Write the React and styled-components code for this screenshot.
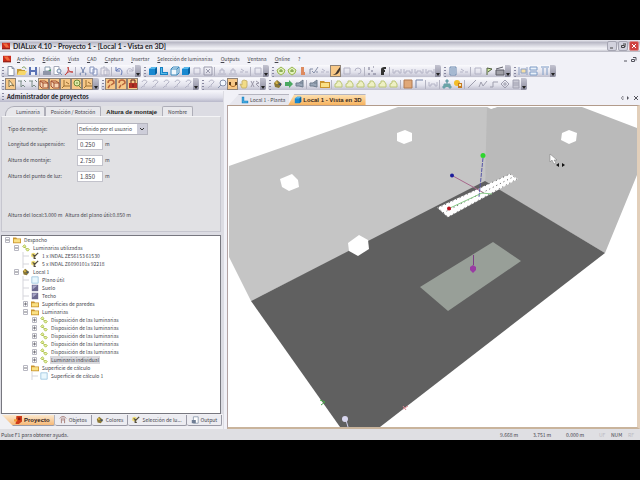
import React from 'react';
import styled, { createGlobalStyle, css } from 'styled-components';

const GlobalStyle = createGlobalStyle`
	* {
		box-sizing: border-box;
	}
	body {
		margin: 0;
		background: #000;
		font-family: 'Noto Sans CJK SC', 'Liberation Sans', Arial, sans-serif;
		font-size: 5px;
		line-height: 8px;
		color: #44444c;
	}
	button,
	input,
	select {
		font: inherit;
		color: inherit;
		margin: 0;
		padding: 0;
		border: 0;
		background: none;
		border-radius: 0;
	}
	a {
		color: inherit;
		text-decoration: none;
	}
	svg {
		display: block;
		flex: none;
	}
`;

const Screen = styled.div`
	min-height: 100vh;
	padding: 40px 0;
	display: flex;
	flex-direction: column;
	background: #000;
`;

const Window = styled.div`
	flex: 1;
	display: flex;
	flex-direction: column;
	background: #f1f1f7;
`;

const TitleBar = styled.header`
	display: flex;
	align-items: center;
	height: 12px;
	padding: 0 1px 0 2px;
	gap: 3px;
	background: linear-gradient(#e8e8ef, #b9b9c6 20%, #e3e3ea 55%, #f6f6fa 75%, #b2b2bd);
`;

const Title = styled.h1`
	flex: 1;
	margin: 0;
	font-family: Lato, 'Liberation Sans', sans-serif;
	font-size: 7px;
	line-height: 10px;
	color: #26262b;
`;

const WindowButton = styled.button`
	width: 10px;
	height: 10px;
	display: grid;
	place-items: center;
	border: 1px solid ${(p) => (p.$close ? '#d98a8a' : '#a5a5b2')};
	border-radius: 2px;
	background: ${(p) => (p.$close ? '#cf4240' : '#d2d2dd')};
	color: ${(p) => (p.$close ? '#fff' : '#444')};
`;

const WindowButtons = styled.div`
	display: flex;
	gap: 1px;
`;

const MenuBar = styled.nav`
	display: flex;
	align-items: center;
	height: 13px;
	padding: 0 3px;
`;

const MenuItems = styled.div`
	flex: 1;
	display: flex;
	gap: 8px;
	padding-left: 6px;
	white-space: nowrap;
	a::first-letter {
		text-decoration: underline;
	}
`;

const ChildButtons = styled.div`
	display: flex;
	gap: 1px;
`;

const FlatButton = styled.button`
	display: grid;
	place-items: center;
	width: 7px;
	height: 10px;
	color: #55555e;
`;

const ToolRow = styled.div`
	display: flex;
	height: 13px;
	gap: 2px;
	padding-left: 1px;
`;

const Group = styled.div`
	display: flex;
	align-items: center;
	height: 12px;
	padding-left: 4px;
	border-radius: 2px;
	background:
		radial-gradient(circle, #8888a0 40%, transparent 50%) 1px 1px / 2px 3px repeat-y,
		linear-gradient(#fafafd, #e2e2ec 60%, #bfbfce);
`;

const ToolButton = styled.button`
	width: 11px;
	height: 12px;
	display: grid;
	place-items: center;
	${(p) =>
		p.$active &&
		css`
			background: #f7c887;
			border: 1px solid #8f8378;
		`}
`;

const Separator = styled.span`
	width: 1px;
	height: 9px;
	margin: 0 1px;
	background: #b3b3c2;
`;

const Overflow = styled.button`
	align-self: stretch;
	width: 6px;
	margin-left: auto;
	display: grid;
	place-items: end center;
	padding-bottom: 1px;
	border-radius: 0 2px 2px 0;
	background: linear-gradient(#c4c4d1, #8c8c9e);
`;

const Workspace = styled.div`
	flex: 1;
	display: flex;
	min-height: 0;
`;

const Sidebar = styled.aside`
	flex: 0 0 35%;
	min-width: 0;
	display: flex;
	flex-direction: column;
	padding-right: 1px;
	background: #dcdce3;
`;

const PanelTitle = styled.h2`
	margin: 0;
	height: 11px;
	padding: 1px 0 0 7px;
	font-size: 6px;
	line-height: 9px;
	color: #25252c;
	background:
		radial-gradient(circle, #8888a0 40%, transparent 50%) 2px 1px / 2px 3px repeat-y,
		linear-gradient(#f5f5fa, #dcdce8 60%, #b8b8ca);
`;

const FormTabs = styled.div`
	display: flex;
	height: 14px;
	padding: 4px 0 0 5px;
`;

const FormTab = styled.button`
	height: 10px;
	padding: 0 5px;
	white-space: nowrap;
	border: 1px solid #aeaeb8;
	border-bottom: 0;
	border-radius: 2px 2px 0 0;
	background: #e8e8ec;
	&:first-child {
		padding: 0 4px 0 10px;
		border-radius: 9px 2px 0 0;
	}
	${(p) =>
		p.$active &&
		css`
			padding: 0 4px;
			font-family: 'Liberation Sans', Arial, sans-serif;
			font-size: 6px;
			font-weight: bold;
			color: #222;
			border-color: transparent;
			background: #e1e1e4;
		`}
`;

const FormPanel = styled.form`
	height: 116px;
	margin: 0 2px 0 1px;
	padding: 6px 6px 0;
	border: 1px solid #c6c6cf;
	border-top-color: #f4f4f6;
	background: #e1e1e4;
`;

const Field = styled.div`
	display: flex;
	align-items: center;
	height: 12px;
	margin-bottom: ${(p) => (p.$first ? 3 : 4)}px;
	white-space: nowrap;
	label {
		width: 69px;
	}
`;

const NumberInput = styled.input`
	width: 26px;
	height: 11px;
	margin-right: 2px;
	padding-left: 2px;
	font-size: 6px;
	border: 1px solid #c2c2cb;
	background: #fff;
`;

const SelectBox = styled.div`
	display: grid;
	grid-template-columns: 1fr 10px;
	width: 71px;
	height: 12px;
	border: 1px solid #b4b4be;
	background: #fff;
	svg {
		grid-area: 1 / 2;
		place-self: stretch;
		pointer-events: none;
		background: #cdcdd9;
	}
`;

const Select = styled.select`
	grid-area: 1 / 1 / 2 / 3;
	appearance: none;
	width: 100%;
	height: 10px;
	padding-left: 1px;
`;

const Heights = styled.p`
	display: flex;
	gap: 3px;
	margin: 29px 0 0;
`;

const TreeBox = styled.ul`
	flex: 1;
	margin: 3px 2px 0 1px;
	padding: 0;
	list-style: none;
	border: 1px solid #77777f;
	background: #fff;
`;

const TreeRow = styled.li`
	display: flex;
	align-items: center;
	height: 8px;
	padding-left: ${(p) => 2 + p.$depth * 9}px;
	gap: 2px;
	white-space: nowrap;
	span {
		padding: 0 1px;
		background: ${(p) => (p.$selected ? '#d8d8dc' : 'none')};
	}
`;

const BottomTabs = styled.nav`
	display: flex;
	height: 15px;
	padding: 1px 0 3px 2px;
	background: #f0f0f4;
`;

const BottomTab = styled.button`
	display: flex;
	align-items: center;
	justify-content: center;
	gap: 2px;
	padding: 0 4px;
	white-space: nowrap;
	border: solid #9a9aa6;
	border-width: 0 1px 1px 0;
	border-radius: 0 0 2px 2px;
	background: #ececf1;
	${(p) =>
		p.$active &&
		css`
			padding-left: 12px;
			font-family: 'Liberation Sans', Arial, sans-serif;
			font-size: 6px;
			font-weight: bold;
			color: #33221a;
			background: linear-gradient(#fbe9cf, #f6b978);
			clip-path: polygon(0 0, 100% 0, 100% 100%, 11px 100%);
		`}
`;

const Viewer = styled.main`
	flex: 1;
	min-width: 0;
	display: flex;
	flex-direction: column;
	padding-left: 3px;
`;

const ViewTabs = styled.div`
	display: flex;
	align-items: flex-end;
	height: 14px;
	padding: 0 1px 0 2px;
`;

const ViewTab = styled.button`
	display: flex;
	align-items: center;
	justify-content: center;
	gap: 1px;
	height: 11px;
	padding: 0 4px 0 12px;
	white-space: nowrap;
	border-top: 1px solid #b5b5c0;
	background: #e7e7ee;
	clip-path: polygon(0 100%, 10px 0, 100% 0, 100% 100%);
	${(p) =>
		p.$active &&
		css`
			padding: 0 4px 0 6px;
			margin-left: -1px;
			font-family: 'Liberation Sans', Arial, sans-serif;
			font-size: 6px;
			font-weight: bold;
			color: #3a2a1c;
			background: linear-gradient(#fde0b0, #f7b25d);
			clip-path: polygon(0 100%, 6px 0, 100% 0, 100% 100%);
		`}
`;

const ViewNav = styled.div`
	display: flex;
	margin-left: auto;
	align-self: center;
`;

const Canvas = styled.div`
	flex: 1;
	min-height: 0;
	padding: 1px 0 0 1px;
	border: 1px solid #b29b8b;
	border-width: 1px 3px 2px 1px;
	border-color: #b29b8b #e2cfba #c9b49c #b3a3a3;
	background: #fff;
	svg {
		width: 100%;
	}
`;

const StatusBar = styled.footer`
	display: flex;
	align-items: center;
	height: 11px;
	padding-left: 1px;
	background: #dfdfe3;
	span:first-child {
		flex: 1;
	}
`;

const Coordinate = styled.span`
	width: 33px;
`;

const LockKey = styled.span`
	width: ${(p) => (p.$on ? 17 : 12)}px;
	color: ${(p) => (p.$on ? '#44444c' : '#b9b9c2')};
`;

const pale = '#b4b4c6';

const icons = {
	app: (
		<>
			<path d="M0 1h10v8H0z" fill="#c92a1c" />
			<path d="M1 2h5l3 5H5z" fill="#f06a3c" />
			<path d="M0 8h10v1H0z" fill="#7a1c18" />
		</>
	),
	page: <path d="M2 .5h4l2 2v7H2z M6 .5v2h2" fill="#fff" stroke="#8b93a8" />,
	open: (
		<>
			<path d="M0 3h4l1 1h3v5H0z" fill="#c49a35" />
			<path d="M2 5h8L8 9H0z" fill="#f7d76a" />
			<path d="M5 2c2-2 3-1 4 1" fill="none" stroke="#7ca05a" />
		</>
	),
	save: (
		<>
			<path d="M1 1h8v8H1z" fill="#5b72b5" />
			<path d="M3 1h4v3H3z M3 6h4v3H3z" fill="#eef1fa" />
		</>
	),
	print: (
		<>
			<path d="M3 1h5v4H3z" fill="#fff" stroke="#8a9db0" />
			<path d="M1 5h8v4H1z" fill="#8f96a8" />
			<path d="M6 5l3-2v2z" fill="#48a060" />
		</>
	),
	preview: (
		<>
			<path d="M1 .5h5v8H1z" fill="#fff" stroke="#a4a9b8" />
			<circle cx="6" cy="5" r="2" fill="#e4eef8" stroke="#788cab" />
			<path d="M7 7l2 2" stroke="#788cab" />
		</>
	),
	pdf: <path d="M1 9c3-2 4-6 3-8 0 4 3 6 5 5-3-1-6 0-8 3" fill="none" stroke="#c5403c" />,
	cut: <path d="M3 1l3 6M7 1L4 7M3 7a1 1 0 100 2M7 7a1 1 0 110 2" fill="none" stroke="#6e80a9" />,
	copy: <path d="M1 1h4v6H1z M4 3h4v6H4z" fill="#f6f8ff" stroke="#8795bd" />,
	paste: <path d="M1 2h6v7H1z M4 4h5v5H4z M3 1h2" fill="#eceaf0" stroke={pale} />,
	undo: <path d="M2 1v4h4M2 5c3-5 8-1 5 4" fill="none" stroke="#6277b5" />,
	redo: <path d="M8 1v4H4M8 5C5 0 0 4 3 8" fill="none" stroke={pale} />,
	cube: (
		<>
			<path d="M1 3l3-2h5v6L7 9H1z" fill="#1888d0" />
			<path d="M1 3l3-2h5L7 3z" fill="#58b8ea" />
			<path d="M7 3l2-2v6L7 9z" fill="#08609f" />
		</>
	),
	lshape: (
		<>
			<path d="M1 1h3v5h5v3H1z" fill="#1780c4" />
			<path d="M2 2h1v5h5v1H2z" fill="#5bbde8" />
		</>
	),
	cubeLine: <path d="M1 3h6v6H1z M1 3l2-2h6v6L7 9M7 3l2-2" fill="#eff7fc" stroke="#3988bc" />,
	box: <path d="M2 2h6v6H2z" fill="none" stroke={pale} />,
	cross: <path d="M1 1h8v8H1z M3 3l4 4M7 3L3 7" fill="none" stroke="#9a9aac" />,
	bars: <path d="M1 8h8M3 7V4h4v3M5 4V2" fill="none" stroke={pale} />,
	dash: <path d="M1 6h3M6 6h3M2 3l3 2" fill="none" stroke={pale} />,
	globe: (
		<>
			<path d="M1 4l4-3 4 3-1 3-3 2-3-2z" fill="#e3f3bd" stroke="#9ab650" />
			<path d="M5 3v3M3 5h4" stroke="#6f9436" fill="none" />
		</>
	),
	thermo: <path d="M3 1h3v5h1v3H3z" fill="#dd8a5f" />,
	check: <path d="M1 8V3h3M3 5l2 2 4-6M7 6h2" fill="none" stroke="#8790a8" />,
	brush: <path d="M1 8c3 1 4-1 5-3l3-4v3C8 8 4 10 1 8z" fill="#3f342e" />,
	circle: <path d="M2 5a3 3 0 116 0 3 3 0 01-3 3" fill="none" stroke={pale} />,
	dots: <path d="M2 1v3M5 4v2M2 7v2M6 8h3M6 1h1" stroke="#75758c" fill="none" />,
	bold: <path d="M3 9V4c0-3 2-3 5-3v2c-2 0-2 0-2 1h1v2H6v3z" fill="#333" />,
	mirror: <path d="M1 3v4h2V5h4v2h2V3" fill="none" stroke={pale} />,
	server: <path d="M2 1h6v8H2z M3 3h4M3 5h4M3 7h4" fill="#dfe8f4" stroke="#6d89ae" />,
	flag: <path d="M3 9V2l5 1-4 3" fill="#cde9a0" stroke="#525f42" />,
	clap: <path d="M1 4h8v5H1z M1 3l7-2" fill="#a1a1a8" stroke="#5d5d66" />,
	layout: <path d="M1 1v8M3 3h5v4H3z M9 1v8" fill="#f5dfa8" stroke="#8da0c4" />,
	rows: <path d="M1 1h7v3H1z M1 6h7v3H1z" fill="#e9f1fa" stroke="#7f9cc6" />,
	columns: <path d="M1 1h8M3 2v7M7 2v7" fill="none" stroke="#7f9cc6" />,
	arrow: <path d="M3 1v7l2-2 3 1z" fill="#fff7dc" stroke="#85744d" />,
	pick: <path d="M1 2h4M4 2v6l2-2 2 2M7 1l2 2" fill="none" stroke="#7b8c86" />,
	room: <path d="M1 2h5l3 2v5H3L1 7z M1 2l3 2h5M4 4v4" fill="#f6d5b2" stroke="#a14e31" />,
	axes: <path d="M3 1v6h6M3 7L1 9M5 3l3 2" fill="none" stroke="#9a6e31" />,
	lens: <path d="M2 4a3 3 0 116 0 3 3 0 01-6 0M6 6l3 3M4 4h2" fill="#dceca8" stroke="#6d8a37" />,
	magnet: <path d="M2 4c0-4 6-4 6 0L5 6M4 6L2 9" fill="none" stroke="#b8643c" strokeWidth="1.5" />,
	lockRed: (
		<>
			<path d="M1 4h8v5H1z" fill="#b22e25" />
			<path d="M3 4V1h4v3M5 5v3" fill="none" stroke="#642019" />
		</>
	),
	lamp: <path d="M3 3c1-3 5-2 5 0L5 6v2M2 9l2-2" fill="none" stroke={pale} />,
	zoom: <path d="M3 4a3 3 0 116 0 3 3 0 01-6 0M4 6L1 9" fill="#f3f8ff" stroke="#8893ab" />,
	eye: (
		<>
			<path d="M1 3h2v3H1z M7 3h2v3H7z" fill="#5a3a18" />
			<path d="M2 6c2 2 4 2 6 0" fill="none" stroke="#a05f1c" />
		</>
	),
	hand: <path d="M3 9L1 5l2 1V2l2-1 3 1v5L7 9z" fill="#f2dc86" stroke="#c9b470" />,
	percent: <path d="M1 2l3 6M4 2L1 8M6 2l3 2-3 1 3 3" fill="none" stroke="#9a98a8" />,
	palette: (
		<>
			<path d="M1 4l3-3 5 4-3 4-4-1z" fill="#8a7735" />
			<path d="M2 3l2-1 1 3H3z" fill="#d7b64a" />
			<path d="M5 5l3-1v3z" fill="#37527a" />
		</>
	),
	go: <path d="M1 3h4V1l4 4-4 4V7H1z" fill="#4aa860" />,
	camera: <path d="M1 4h3l4-3v7L4 7H1z M5 4h3" fill="#9aa7b8" stroke="#6f7c8d" />,
	folder: (
		<>
			<path d="M0 2h4l1 1h5v6H0z" fill="#c9942e" />
			<path d="M1 4h8v4H1z" fill="#fae185" />
		</>
	),
	plant: <path d="M1 8h7V5L6 2H3v2L1 5z" fill="#eef0c4" stroke="#bcc676" />,
	square: <path d="M1 1h8v8H1z" fill="#e0a878" stroke="#b07a52" />,
	corner: <path d="M2 9V1h7" fill="none" stroke="#7381a5" />,
	tree: <path d="M5 2v3M2 8V5h6v3M4 1h2v2H4z M1 7h2v2H1z M7 7h2v2H7z" fill="#6aa7a2" stroke="#6aa0ac" />,
	sun: (
		<>
			<circle cx="4" cy="4" r="3" fill="#f3bd28" />
			<path d="M5 4h4v5H5z" fill="#c47a22" />
			<path d="M6 5h2v2H6z" fill="#fbe9b0" />
		</>
	),
	line: <path d="M1 9l8-8" stroke="#9f9fae" />,
	zigzag: <path d="M1 8l2-5 2 4 4-5" fill="none" stroke="#9f9fae" />,
	step: <path d="M1 8h3V3h5" fill="none" stroke="#9f9fae" />,
	ring: <path d="M5 1l4 4-4 4-4-4z M4 4h2v2H4z" fill="none" stroke="#9f9fae" />,
	grid: <path d="M2 1h6v8H2z M2 4h6M2 6h6" fill="#c9c9d4" stroke="#a2a2b2" />,
	bulbs: <path d="M1 3l2-2 2 2-2 2z M5 7l2-2 2 2-2 2z M3 4l3 2" fill="#ecf6ad" stroke="#9db42d" />,
	fixture: (
		<>
			<circle cx="3" cy="4" r="3" fill="#efdd78" />
			<path d="M2 3l3 2 4-4M4 5v3h2" fill="none" stroke="#514b3d" strokeWidth="1.5" />
		</>
	),
	plane: <path d="M1 1h8v8H1z" fill="#e9f7fd" stroke="#98c2de" />,
	surface: (
		<>
			<path d="M1 1h8v8H1z" fill="#6b688f" />
			<path d="M2 2h6L2 7z" fill="#aaa8c8" />
		</>
	),
	project: (
		<>
			<path d="M3 0h7v7L6 10H2z" fill="#cf3c1a" />
			<path d="M0 4h4v3H0z" fill="#f2a13a" />
			<path d="M5 2h3v3H5z" fill="#8f1a10" />
		</>
	),
	objects: <path d="M1 3c2-3 6-3 8 0M3 3v6M7 3v6M5 2v4" fill="none" stroke="#9a6861" />,
	output: (
		<>
			<path d="M3 1h6v8H3z" fill="#fff" stroke="#8796aa" />
			<path d="M1 5h5v4H1z" fill="#6e7d94" />
		</>
	),
};

const Icon = ({ name, size = 10 }) => (
	<svg width={size} height={size} viewBox="0 0 10 10" aria-hidden="true">
		{icons[name]}
	</svg>
);

// "|" is a separator, a leading "*" marks a pressed button
const topTools = [
	'page open save | print preview pdf | cut copy paste | undo redo',
	'cube lshape cubeLine cube box cross | bars bars dash | box',
	'globe globe thermo check dash *brush box circle | dots bold | mirror mirror mirror mirror',
	'server dash | box flag clap',
	'layout rows columns',
];

const bottomTools = [
	'*arrow pick pick *room *room *axes *lens *axes',
	'*magnet *magnet *lockRed lamp lamp lamp lamp lamp',
	'lamp zoom *eye hand percent',
	'palette go camera | camera folder | plant plant plant plant plant plant | square corner | mirror | tree sun | line zigzag step ring grid',
];

const Toolbar = ({ groups, label }) => (
	<ToolRow role="toolbar" aria-label={label}>
		{groups.map((group) => (
			<Group key={group}>
				{group.split(' ').map((item, i) =>
					item === '|' ? (
						<Separator key={i} />
					) : (
						<ToolButton key={i} $active={item[0] === '*'} aria-label={item.replace('*', '')}>
							<Icon name={item.replace('*', '')} />
						</ToolButton>
					)
				)}
				<Overflow aria-label="Más botones">
					<svg width="4" height="4" viewBox="0 0 4 4">
						<path d="M0 1h4L2 4z" fill="#222" />
					</svg>
				</Overflow>
			</Group>
		))}
	</ToolRow>
);

const menus = ['Archivo', 'Edición', 'Vista', 'CAD', 'Captura', 'Insertar', 'Selección de luminarias', 'Outputs', 'Ventana', 'Online', '?'];

const heights = [
	['suspension', 'Longitud de suspensión:', '0.250'],
	['montaje', 'Altura de montaje:', '2.750'],
	['punto', 'Altura del punto de luz:', '1.850'],
];

// [depth, toggle, icon, text]
const tree = [
	[0, '-', 'folder', 'Despacho'],
	[1, '-', 'bulbs', 'Luminarias utilizadas'],
	[2, '', 'fixture', '1 x INDAL ZE56153 61530'],
	[2, '', 'fixture', '5 x INDAL Z6090101s 92218'],
	[1, '-', 'palette', 'Local 1'],
	[2, '', 'plane', 'Plano útil'],
	[2, '', 'surface', 'Suelo'],
	[2, '', 'surface', 'Techo'],
	[2, '+', 'folder', 'Superficies de paredes'],
	[2, '-', 'folder', 'Luminarias'],
	[3, '+', 'bulbs', 'Disposición de las luminarias'],
	[3, '+', 'bulbs', 'Disposición de las luminarias'],
	[3, '+', 'bulbs', 'Disposición de las luminarias'],
	[3, '+', 'bulbs', 'Disposición de las luminarias'],
	[3, '+', 'bulbs', 'Disposición de las luminarias'],
	[3, '+', 'bulbs', 'Luminaria individual'],
	[2, '-', 'folder', 'Superficie de cálculo'],
	[3, '', 'plane', 'Superficie de cálculo 1'],
];

const Toggle = ({ sign }) => (
	<svg width="7" height="8" viewBox="0 0 7 8">
		{sign ? (
			<>
				<path d="M1.5 1.5h4v5h-4z" fill="#fff" stroke="#b8b8c2" />
				<path d={sign === '+' ? 'M2 4h3M3.500 2.500v3' : 'M2 4h3'} stroke="#77777f" />
			</>
		) : (
			<path d="M1 0v8M1 4h6" fill="none" stroke="#d5d5db" />
		)}
	</svg>
);

const Scene = () => (
	<svg viewBox="229 107 408 320" role="img" aria-label="Vista en 3D">
		<path d="M229 166L398 107H491L485 183 251 301 229 257z" fill="#c5c5c5" />
		<path d="M487 107H491V108.500L497 107H582L637 128V175L605 253 485 182z" fill="#bababa" />
		<path d="M251 301L485 181 605 253 380 427H340z" fill="#606060" />
		<path d="M493 242L521 261 448 311 420 287z" fill="#989f98" />
		<g fill="#fff">
			<path d="M280 179l12-5 6 6 1 7-10 4-7-4z" />
			<path d="M397 133l8-3 7 3v8l-8 3-7-3z" />
			<path d="M348 243l11-8 9 5 1 9-11 7-9-5z" />
			<path d="M562 133l7-3 8 3-1 8-7 3-8-4z" />
			<path d="M487 107h10l-6 2z" />
		</g>
		<path d="M439 208L510 175 516 179 448 216z" fill="#fff" stroke="#fff" strokeWidth="2" />
		<path d="M438 208L510 174 517 179 448 217zM443 213L513 177" fill="none" stroke="#555" strokeDasharray="1 3" />
		<path d="M453 176L484 193" stroke="#a8688c" />
		<path d="M483 158L479 197" stroke="#5656a8" strokeDasharray="4 1" />
		<path d="M450 208L482 193 492 194" fill="none" stroke="#86c986" />
		<circle cx="452" cy="175.500" r="2" fill="#1c1c9c" />
		<circle cx="483" cy="155.500" r="2.500" fill="#2ed52e" />
		<circle cx="449" cy="208.500" r="2" fill="#b8101c" />
		<path d="M473.500 255v10" stroke="#7d3f86" />
		<path d="M470 267l3-2 3 2v3l-3 3-3-3z" fill="#993ba3" />
		<path d="M320 400l5 2-4 3" fill="none" stroke="#46a846" />
		<path d="M403 406l3 4M403 409l5-3" stroke="#dc8b96" />
		<path d="M346 420l2 7" stroke="#d5d5f2" />
		<circle cx="345" cy="419" r="3" fill="#d9d7f0" />
		<path d="M550 154v8l2-2 2 4 2-1-2-3h3z" fill="#fff" stroke="#777" strokeWidth=".5" />
		<path d="M556 165l3-2v4zM565 165l-3-2v4zM558 165h5" fill="#111" />
	</svg>
);

const App = () => {
	return (
		<Screen>
			<GlobalStyle />
			<Window>
				<TitleBar>
					<Icon name="app" size={8} />
					<Title>DIALux 4.10 - Proyecto 1 - [Local 1 - Vista en 3D]</Title>
					<WindowButtons>
						<WindowButton aria-label="Minimizar">
							<svg width="6" height="6"><path d="M1 5h3" stroke="currentColor" /></svg>
						</WindowButton>
						<WindowButton aria-label="Restaurar">
							<svg width="6" height="6"><path d="M1.500 2.500h3v2h-3zM3 1h3v3" fill="none" stroke="currentColor" /></svg>
						</WindowButton>
						<WindowButton $close aria-label="Cerrar">
							<svg width="6" height="6"><path d="M1 1l4 4M5 1L1 5" stroke="currentColor" /></svg>
						</WindowButton>
					</WindowButtons>
				</TitleBar>
				<MenuBar>
					<Icon name="app" size={8} />
					<MenuItems>
						{menus.map((menu) => (
							<a href="#" key={menu}>{menu}</a>
						))}
					</MenuItems>
					<ChildButtons>
						<FlatButton aria-label="Minimizar vista">
							<svg width="6" height="6"><path d="M1 5h3" stroke="currentColor" /></svg>
						</FlatButton>
						<FlatButton aria-label="Restaurar vista">
							<svg width="6" height="6"><path d="M.5 3.500h3v2h-3zM2 1.500h3v3" fill="none" stroke="currentColor" /></svg>
						</FlatButton>
					</ChildButtons>
				</MenuBar>
				<Toolbar groups={topTools} label="Estándar" />
				<Toolbar groups={bottomTools} label="Edición" />
				<Workspace>
					<Sidebar>
						<PanelTitle>Administrador de proyectos</PanelTitle>
						<FormTabs>
							<FormTab>Luminaria</FormTab>
							<FormTab>Posición / Rotación</FormTab>
							<FormTab $active>Altura de montaje</FormTab>
							<FormTab>Nombre</FormTab>
						</FormTabs>
						<FormPanel>
							<Field $first>
								<label htmlFor="tipo">Tipo de montaje:</label>
								<SelectBox>
									<Select id="tipo">
										<option>Definido por el usuario</option>
									</Select>
									<svg width="10" height="10" viewBox="0 0 10 10">
										<path d="M3 4l2 2 2-2" fill="none" stroke="#333" />
									</svg>
								</SelectBox>
							</Field>
							{heights.map(([id, label, value]) => (
								<Field key={id}>
									<label htmlFor={id}>{label}</label>
									<NumberInput id={id} defaultValue={value} />m
								</Field>
							))}
							<Heights>
								<span>Altura del local:3.000 m</span>
								<span>Altura del plano útil:0.850 m</span>
							</Heights>
						</FormPanel>
						<TreeBox>
							{tree.map(([depth, toggle, icon, text], i) => (
								<TreeRow key={i} $depth={depth} $selected={text === 'Luminaria individual'}>
									<Toggle sign={toggle} />
									<Icon name={icon} size={8} />
									<span>{text}</span>
								</TreeRow>
							))}
						</TreeBox>
						<BottomTabs>
							<BottomTab $active><Icon name="project" size={8} />Proyecto</BottomTab>
							<BottomTab><Icon name="objects" size={8} />Objetos</BottomTab>
							<BottomTab><Icon name="palette" size={8} />Colores</BottomTab>
							<BottomTab><Icon name="fixture" size={8} />Selección de lu...</BottomTab>
							<BottomTab><Icon name="output" size={8} />Output</BottomTab>
						</BottomTabs>
					</Sidebar>
					<Viewer>
						<ViewTabs>
							<ViewTab><Icon name="lshape" size={8} />Local 1 - Planta</ViewTab>
							<ViewTab $active><Icon name="cube" size={8} />Local 1 - Vista en 3D</ViewTab>
							<ViewNav>
								<FlatButton aria-label="Anterior">
									<svg width="6" height="6"><path d="M4 1v4L2 3z" fill="none" stroke="currentColor" strokeWidth=".5" /></svg>
								</FlatButton>
								<FlatButton aria-label="Siguiente">
									<svg width="6" height="6"><path d="M1 1v4l2-2z" fill="currentColor" /></svg>
								</FlatButton>
								<FlatButton aria-label="Cerrar vista">
									<svg width="6" height="6"><path d="M1 1l4 4M5 1L1 5" stroke="currentColor" /></svg>
								</FlatButton>
							</ViewNav>
						</ViewTabs>
						<Canvas>
							<Scene />
						</Canvas>
					</Viewer>
				</Workspace>
				<StatusBar>
					<span>Pulse F1 para obtener ayuda.</span>
					<Coordinate>9.668 m</Coordinate>
					<Coordinate>3.751 m</Coordinate>
					<Coordinate>0.000 m</Coordinate>
					<LockKey>UF</LockKey>
					<LockKey $on>NUM</LockKey>
					<LockKey>RF</LockKey>
				</StatusBar>
			</Window>
		</Screen>
	);
};

export default App;
